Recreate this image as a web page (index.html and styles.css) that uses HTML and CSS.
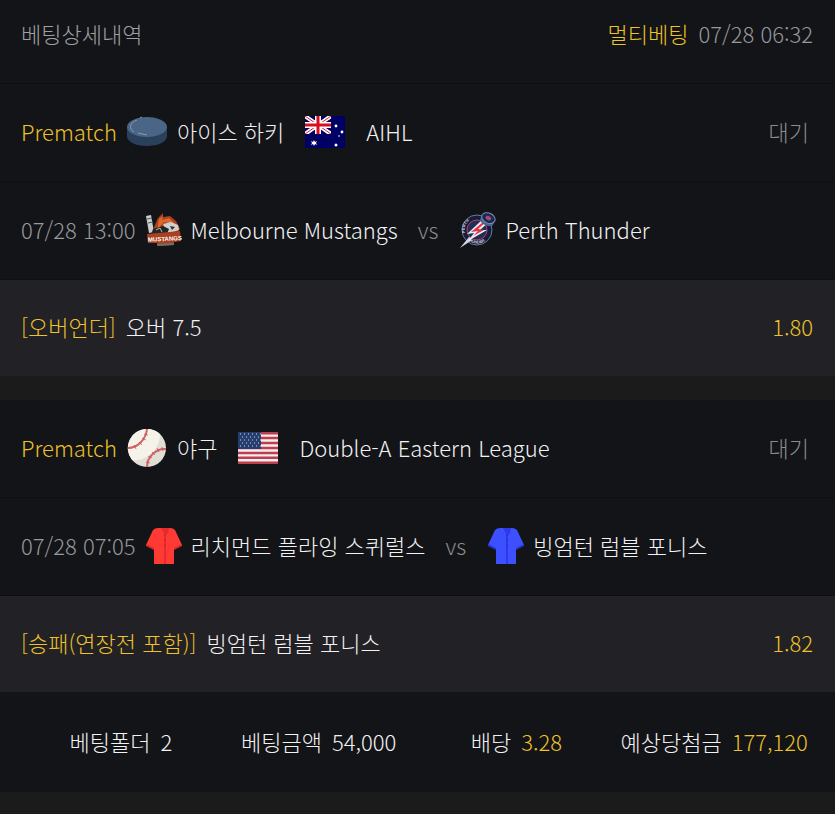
FILE: index.html
```html
<!DOCTYPE html>
<html lang="ko">
<head>
    <meta charset="UTF-8">
    <meta name="viewport" content="width=device-width, initial-scale=1.0">
    <title>베팅상세내역</title>
    <link rel="stylesheet" href="styles.css">
</head>
<body>
    <header class="row header">
        <h1 class="title">베팅상세내역</h1>
        <span class="right"><span class="yellow">멀티베팅</span><span class="gray">07/28 06:32</span></span>
    </header>

    <section class="bet">
        <div class="row league">
            <span class="yellow">Prematch</span>
            <svg class="icon" viewBox="0 0 40 40">
                <path d="M0 15V24C0 30 9 34 20 34S40 30 40 24V15Z" fill="#2b405b"/>
                <ellipse cx="20" cy="15" rx="20" ry="10" fill="#4b6586"/>
                <path d="M10 8C2 11 2 17 7 20M11 21L20 23M13 6L15 5" fill="none" stroke="#809bb8" stroke-width="1"/>
            </svg>
            <span class="sport">아이스 하키</span>
            <svg class="flag" viewBox="0 0 40 32">
                <path d="M0 0H40V32H0Z" fill="#000064"/>
                <path d="M0 0L26 18M26 0L0 18" stroke="#fff" stroke-width="4"/>
                <path d="M0 0L26 18M26 0L0 18" stroke="#d5202d" stroke-width="1"/>
                <path d="M13 0V18M0 9H26" stroke="#fff" stroke-width="6"/>
                <path d="M13 0V18M0 9H26" stroke="#d90c20" stroke-width="3"/>
                <path d="M26 0H40V32H0V18H26Z" fill="#000064"/>
                <path d="M9 24l1 2 2-1-1 2 1 2-2-1-1 2-1-2-2 1 1-2-1-2 2 1z" fill="#fff"/>
                <g fill="#fff"><circle cx="31" cy="10" r="1.4"/><circle cx="37" cy="16" r="1.4"/><circle cx="34" cy="20" r=".8"/><circle cx="31" cy="29" r="1.5"/></g>
            </svg>
            <span>AIHL</span>
            <span class="status">대기</span>
        </div>
        <div class="row match">
            <time class="gray">07/28 13:00</time>
            <svg class="team" viewBox="0 0 36 36">
                <path d="M0 4L5 3L8 20L3 21Z" fill="#c9cdcf"/>
                <path d="M1 7L6 6M2 11L7 10" stroke="#55595c" stroke-width="1"/>
                <path d="M8 15L12 6L17 1L17 5L24 4L30 9L34 17L30 22L9 22Z" fill="#a8411f"/>
                <path d="M13 7L17 4L16 8L23 6L29 12L18 10L11 18Z" fill="#dc6830"/>
                <path d="M17 12L25 10L32 13L33 18L27 20L20 20Z" fill="#cfd0cd"/>
                <path d="M7 17L17 14L23 17L21 22L5 23Z" fill="#242526"/>
                <path d="M24 14L29 15L26 18Z" fill="#303133"/>
                <path d="M10 18L14 16L16 20" fill="none" stroke="#bbb" stroke-width="1"/>
                <path d="M1 22L34 19L35 29L28 30V33L11 34V31L2 31Z" fill="#a7411f"/>
                <text class="mustangs" x="2" y="29" transform="rotate(-3 18 28)">MUSTANGS</text>
                <path d="M11 32L28 31V33L12 34Z" fill="#6f7071"/>
            </svg>
            <span>Melbourne Mustangs</span>
            <span class="vs">vs</span>
            <svg class="team" viewBox="0 0 36 36">
                <circle cx="17" cy="18" r="15" fill="#141d3d" stroke="#6d7a9c" stroke-width="1"/>
                <circle cx="17" cy="18" r="10" fill="#202e58" stroke="#b34658" stroke-width="1"/>
                <path id="top" d="M5 21A12 12 0 0 1 21 7" fill="none"/>
                <path id="bottom" d="M7 27A14 14 0 0 0 31 20" fill="none"/>
                <text class="ring"><textPath href="#top">PERTH</textPath></text>
                <text class="ring"><textPath href="#bottom">THUNDER</textPath></text>
                <path d="M0 36L9 25L12 28Z" fill="#d3d9e2"/>
                <path d="M22 8L7 22L14 21L8 29L27 18L20 18L30 9Z" fill="#e8edf5"/>
                <path d="M23 10L11 20L18 19L13 24L24 18L18 17L26 10Z" fill="#df3549"/>
                <g transform="rotate(25 28 7)">
                    <path d="M21 6V10C21 15 35 15 35 10V6Z" fill="#48658f"/>
                    <ellipse cx="28" cy="6" rx="7" ry="5" fill="#172a53" stroke="#7890b4" stroke-width="1"/>
                    <ellipse cx="28" cy="6" rx="3" ry="2" fill="#ae4963"/>
                </g>
            </svg>
            <span>Perth Thunder</span>
        </div>
        <div class="row pick">
            <span class="yellow">[오버언더]</span>
            <span>오버 7.5</span>
            <span class="yellow odds">1.80</span>
        </div>
    </section>

    <section class="bet">
        <div class="row league">
            <span class="yellow">Prematch</span>
            <svg class="icon" viewBox="0 0 40 40">
                <circle cx="20" cy="20" r="19" fill="#e1dfd5"/>
                <path d="M20 1A19 19 0 0 0 5 32C20 34 33 21 33 6A19 19 0 0 0 20 1Z" fill="#f4f2e9"/>
                <path d="M20 1C19 11 11 20 1 20M39 21C29 20 20 29 20 39" fill="none" stroke="#d66065" stroke-width="2"/>
                <path d="M17 6l4 1M15 10l4 2M12 14l3 3M7 17l2 4M35 19l1 4M30 20l2 4M25 24l3 3M21 28l4 2M19 34l4 1" stroke="#b84e56" stroke-width=".7"/>
            </svg>
            <span class="sport">야구</span>
            <svg class="flag" viewBox="0 0 40 32">
                <path d="M0 0H40V32H0Z" fill="#f3edef"/>
                <path d="M0 1.2H40M0 6.1H40M0 11H40M0 16H40M0 20.9H40M0 25.8H40M0 30.8H40" stroke="#bd3d4c" stroke-width="2.5"/>
                <path d="M0 0H23V17H0Z" fill="#263d70"/>
                <path d="M2 2H23M4 5H23M2 8H23M4 11H23M2 14H23" stroke="#d4dbe7" stroke-width="1" stroke-dasharray="1 3"/>
            </svg>
            <span>Double-A Eastern League</span>
            <span class="status">대기</span>
        </div>
        <div class="row match">
            <time class="gray">07/28 07:05</time>
            <svg class="team" viewBox="0 0 36 36">
                <path d="M7 2Q9 0 12 0H24Q27 0 29 2L36 17L28 21V36H8V21L0 17Z" fill="#ff3a35"/>
                <path d="M15 0H23L22 5L20 7V36H18V5Z" fill="#e72b2a"/>
                <path d="M0 16L8 20V22L0 18ZM36 16L28 20V22L36 18Z" fill="#dc2929"/>
                <g fill="#b9201f"><circle cx="19" cy="7" r=".7"/><circle cx="19" cy="12" r=".7"/><circle cx="19" cy="17" r=".7"/></g>
            </svg>
            <span>리치먼드 플라잉 스퀴럴스</span>
            <span class="vs">vs</span>
            <svg class="team" viewBox="0 0 36 36">
                <path d="M7 2Q9 0 12 0H24Q27 0 29 2L36 17L28 21V36H8V21L0 17Z" fill="#3c50ff"/>
                <path d="M15 0H23L22 5L20 7V36H18V5Z" fill="#3039e8"/>
                <path d="M0 16L8 20V22L0 18ZM36 16L28 20V22L36 18Z" fill="#2931dc"/>
                <g fill="#242cc4"><circle cx="19" cy="7" r=".7"/><circle cx="19" cy="12" r=".7"/><circle cx="19" cy="17" r=".7"/></g>
            </svg>
            <span>빙엄턴 럼블 포니스</span>
        </div>
        <div class="row pick">
            <span class="yellow">[승패(연장전 포함)]</span>
            <span>빙엄턴 럼블 포니스</span>
            <span class="yellow odds">1.82</span>
        </div>
    </section>

    <footer class="summary">
        <div class="total"><span>베팅폴더</span><span>2</span></div>
        <div class="total"><span>베팅금액</span><span>54,000</span></div>
        <div class="total"><span>배당</span><span class="yellow">3.28</span></div>
        <div class="total"><span>예상당첨금</span><span class="yellow">177,120</span></div>
    </footer>
</body>
</html>
```
FILE: styles.css
```css
* {
    box-sizing: border-box;
}

body {
    margin: 0;
    background-color: #1b1b1c;
    color: #f2f2f3;
    font-family: "Noto Sans CJK KR", sans-serif;
    font-size: 22px;
    font-weight: 300;
    line-height: 32px;
}

.row {
    display: flex;
    align-items: center;
    height: 98px;
    padding: 0 22px 4px 21px;
    background-color: #131418;
    border-bottom: 1px solid #0e0f12;
    white-space: nowrap;
}

.header {
    height: 84px;
    padding-bottom: 17px;
    justify-content: space-between;
}

.title {
    margin: 0;
    font-size: 22px;
    font-weight: 300;
    color: #a0a0a3;
}

.right {
    display: flex;
    gap: 10px;
}

.yellow {
    color: #eec22a;
}

.gray {
    color: #98999c;
}

.bet + .bet {
    margin-top: 24px;
}

.icon {
    width: 40px;
    height: 40px;
    margin: 3px 10px 0;
}

.flag {
    width: 40px;
    height: 32px;
    margin: 3px 21px 0;
}

.status {
    margin-left: auto;
    padding-right: 4px;
    color: #8a8b8e;
}

.team {
    width: 36px;
    height: 36px;
    margin: 3px 9px 0 10px;
}

.vs {
    margin: 0 12px 0 20px;
    color: #8a8b8e;
}

/* lettering inside the team logos */
.mustangs {
    fill: #fff;
    font-family: "Liberation Sans", sans-serif;
    font-size: 6px;
    font-weight: bold;
}

.ring {
    fill: #cbd1df;
    font-family: "Liberation Sans", sans-serif;
    font-size: 4px;
    font-weight: bold;
}

.pick {
    gap: 10px;
    height: 96px;
    background-color: #222126;
    border-bottom: none;
}

.odds {
    margin-left: auto;
}

.summary {
    display: grid;
    grid-template-columns: repeat(4, 1fr);
    align-items: center;
    height: 100px;
    padding: 0 22px 2px;
    background-color: #131418;
    white-space: nowrap;
}

.total {
    display: flex;
    justify-content: center;
    gap: 10px;
}
```
